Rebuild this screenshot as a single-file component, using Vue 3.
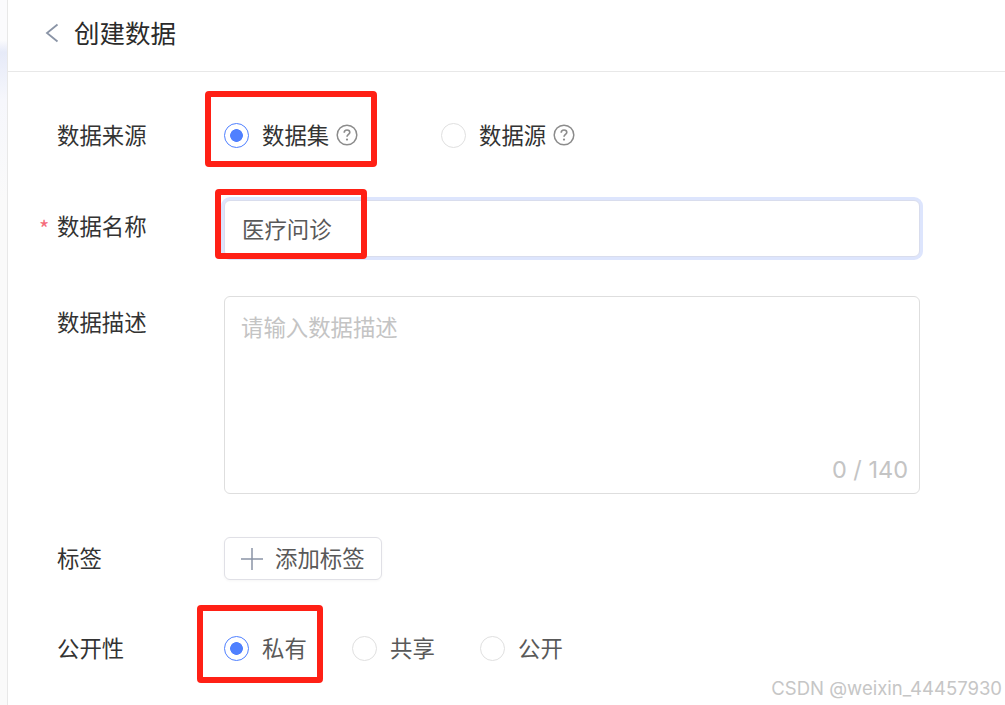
<template>
  <div class="page">
    <div class="side"></div>
    <div class="main">
      <header class="head">
        <svg class="back" width="14" height="20" viewBox="0 0 14 20" fill="none">
          <path d="M12.5 1.5 L2 10 L12.5 18.5" stroke="#8a94a6" stroke-width="1.8" />
        </svg>
        <h1 class="title">创建数据</h1>
      </header>

      <form class="form" @submit.prevent>
        <div class="row row-source">
          <label class="label">数据来源</label>
          <div class="radios">
            <div v-for="item in sources" :key="item" class="radio-item source-item">
              <span :class="['radio', { on: source === item }]" @click="source = item"></span>
              <span class="radio-text dark">{{ item }}</span>
              <svg class="help" width="22" height="22" viewBox="0 0 22 22" fill="none">
                <circle cx="11" cy="11" r="9.8" stroke="#8c8c8c" stroke-width="1.5" />
                <path d="M8.2 8.8 C8.2 7 9.4 6 11 6 C12.6 6 13.8 7 13.8 8.5 C13.8 10.4 11 10.6 11 12.8" stroke="#8c8c8c" stroke-width="1.6" />
                <circle cx="11" cy="15.6" r="1.1" fill="#8c8c8c" />
              </svg>
            </div>
          </div>
        </div>

        <div class="row row-name">
          <label class="label required">数据名称</label>
          <input v-model="name" class="name-input" />
        </div>

        <div class="row row-desc">
          <label class="label">数据描述</label>
          <div class="desc-box">
            <textarea v-model="desc" class="desc-input" placeholder="请输入数据描述"></textarea>
            <span class="count">{{ desc.length }} / 140</span>
          </div>
        </div>

        <div class="row row-tag">
          <label class="label">标签</label>
          <button type="button" class="tag-btn">
            <svg width="24" height="24" viewBox="0 0 24 24" fill="none">
              <path d="M12 1 V23 M1 12 H23" stroke="#8a94a6" stroke-width="1.5" />
            </svg>
            <span class="tag-text">添加标签</span>
          </button>
        </div>

        <div class="row row-public">
          <label class="label">公开性</label>
          <div class="radios">
            <div v-for="item in scopes" :key="item" class="radio-item scope-item">
              <span :class="['radio', { on: scope === item }]" @click="scope = item"></span>
              <span class="radio-text">{{ item }}</span>
            </div>
          </div>
        </div>
      </form>
    </div>

    <!-- 截图上的红框标注 -->
    <div class="mark mark-source"></div>
    <div class="mark mark-name"></div>
    <div class="mark mark-public"></div>
    <div class="watermark">CSDN @weixin_44457930</div>
  </div>
</template>

<script setup>
import { ref } from 'vue'

const sources = ['数据集', '数据源']
const scopes = ['私有', '共享', '公开']

const source = ref('数据集')
const scope = ref('私有')
const name = ref('医疗问诊')
const desc = ref('')
</script>

<style>
html,
body {
  margin: 0;
  background: #fff;
}
</style>

<style scoped>
.page {
  position: relative;
  display: flex;
  width: 1005px;
  height: 705px;
  overflow: hidden;
  background: #fff;
  font-family: "Noto Sans CJK SC", "Liberation Sans", sans-serif;
  color: #333;
}

.side {
  flex: 0 0 7px;
  background: linear-gradient(180deg, #fbfbfd 0, #fbfbfd 40px, #e6eaf8 52px, #f6f7fc 100px, #fafafa 200px);
  border-right: 1px solid #e8e8e8;
}

.main {
  flex: 1;
  min-width: 0;
}

.head {
  display: flex;
  align-items: center;
  height: 66px;
  padding: 0 0 5px 37px;
  border-bottom: 1px solid #e8e8e8;
}

.back {
  margin-right: 15px;
}

.title {
  margin: 0 0 3px;
  font-size: 25.5px;
  line-height: 34px;
  font-weight: 400;
  color: #2b2b2b;
}

.form {
  padding-left: 49px;
}

.row {
  display: flex;
}

.label {
  position: relative;
  flex: 0 0 167px;
  font-size: 22.4px;
  line-height: 32px;
  color: #333;
}

.required::before {
  content: "*";
  position: absolute;
  left: -18px;
  top: 11px;
  color: #f56c7a;
  font-size: 22px;
}

.row-source {
  align-items: center;
  height: 32px;
  margin-top: 47px;
}

.row-source .label,
.row-public .label {
  padding-bottom: 2px;
}

.row-tag .label {
  padding-bottom: 4px;
}

.radios {
  display: flex;
  align-items: center;
}

.radio-item {
  display: flex;
  align-items: center;
}

.source-item {
  width: 217px;
}

.scope-item {
  width: 128px;
}

.radio {
  box-sizing: border-box;
  flex: none;
  width: 25px;
  height: 25px;
  border: 1px solid #e0e0e0;
  border-radius: 50%;
  background: #fff;
  cursor: pointer;
}

.radio.on {
  border-color: #4f80ff;
  background: radial-gradient(circle, #4f80ff 0, #4f80ff 6px, #fff 6.7px);
}

.radio-text {
  margin-left: 13px;
  padding-bottom: 2px;
  font-size: 22.4px;
  line-height: 32px;
  color: #595959;
}

.radio-text.dark {
  color: #333;
}

.help {
  margin-left: 7px;
}

.row-name {
  margin-top: 49px;
}

.row-name .label {
  padding-top: 9px;
}

.name-input {
  box-sizing: border-box;
  width: 696px;
  height: 57px;
  padding: 0 17px 2px;
  border: 1px solid #d9dded;
  border-radius: 6px;
  outline: none;
  box-shadow: 0 0 0 3px #dde5fd;
  font: inherit;
  font-size: 22.4px;
  color: #595959;
}

.row-desc {
  margin-top: 39px;
}

.row-desc .label {
  padding-top: 9px;
}

.desc-box {
  position: relative;
  width: 696px;
  height: 198px;
}

.desc-input {
  box-sizing: border-box;
  display: block;
  width: 100%;
  height: 100%;
  padding: 13px 16px;
  border: 1px solid #dedede;
  border-radius: 6px;
  outline: none;
  resize: none;
  font: inherit;
  font-size: 22.4px;
  line-height: 32px;
  color: #595959;
}

.desc-input::placeholder {
  color: #c4c4c4;
}

.count {
  position: absolute;
  right: 12px;
  bottom: 8px;
  font-family: "Inter", "Liberation Sans", sans-serif;
  font-size: 23.5px;
  line-height: 32px;
  color: #c4c4c4;
}

.row-tag {
  align-items: center;
  margin-top: 43px;
}

.tag-btn {
  display: flex;
  align-items: center;
  gap: 11px;
  box-sizing: border-box;
  width: 158px;
  height: 43px;
  padding: 0 0 0 15px;
  border: 1px solid #e0e0e6;
  border-radius: 6px;
  background: #fff;
  box-shadow: 0 1px 3px rgba(0, 0, 0, 0.04);
  font: inherit;
  font-size: 22.4px;
  color: #595959;
}

.tag-text {
  padding-bottom: 4px;
}

.row-public {
  align-items: center;
  height: 32px;
  margin-top: 52px;
}

.mark {
  position: absolute;
  box-sizing: border-box;
  border: 6px solid #ff2015;
  border-radius: 4px;
}

.mark-source {
  left: 205px;
  top: 91px;
  width: 172px;
  height: 76px;
}

.mark-name {
  left: 215px;
  top: 189px;
  width: 152px;
  height: 70px;
}

.mark-public {
  left: 197px;
  top: 605px;
  width: 126px;
  height: 78px;
}

.watermark {
  position: absolute;
  right: 3px;
  top: 676px;
  font-family: "Inter", "Liberation Sans", sans-serif;
  font-size: 18.5px;
  line-height: 24px;
  color: #c6c6c6;
  white-space: nowrap;
}
</style>
